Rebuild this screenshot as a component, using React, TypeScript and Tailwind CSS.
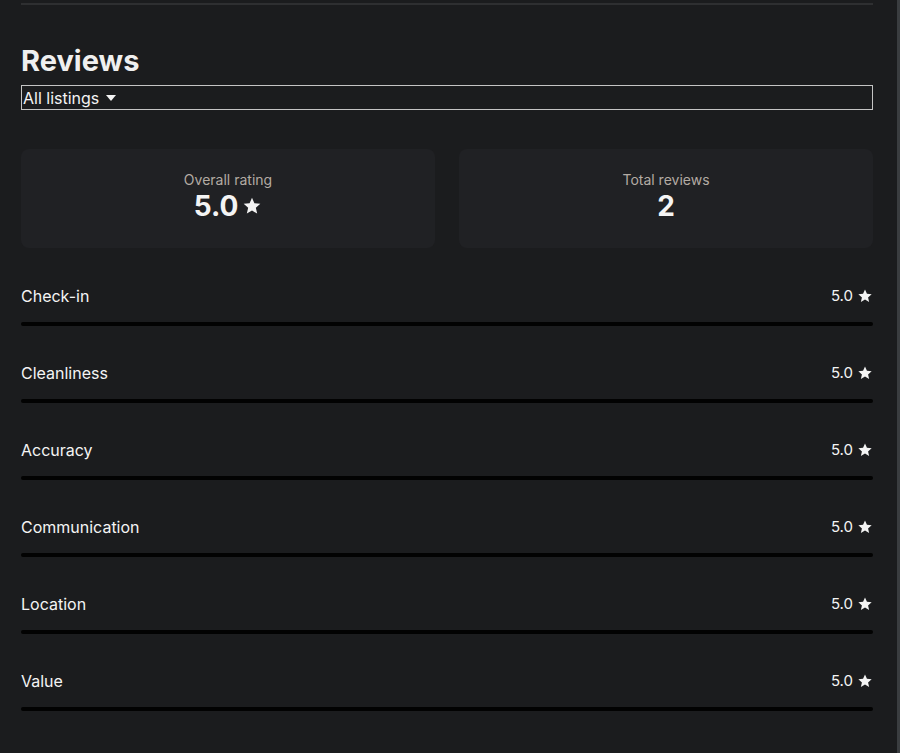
const categories = ["Check-in", "Cleanliness", "Accuracy", "Communication", "Location", "Value"];

function StarIcon({ size }: { size: number }) {
  return (
    <svg width={size} height={size} viewBox="0 0 24 24" fill="currentColor">
      <path d="M12 2.2l2.9 6.6 7.1.6-5.4 4.7 1.6 7-6.2-3.7-6.2 3.7 1.6-7L2 9.4l7.1-.6z" />
    </svg>
  );
}

function StatCard({ label, children }: { label: string; children: React.ReactNode }) {
  return (
    <div className="flex h-[99px] flex-col items-center justify-center rounded-lg bg-[#202124] pb-[5px]">
      <div className="text-[14px] leading-5 text-[#b3aba3]">{label}</div>
      <div className="flex items-center gap-1 text-[28px] font-bold leading-8 text-[#f4f4f4]">{children}</div>
    </div>
  );
}

export default function App() {
  return (
    <div className="flex min-h-[753px] w-full bg-[#1b1c1e] font-['Inter',sans-serif] text-[#f4f4f4]">
      <div className="flex-1 pl-[21px] pr-[24px]">
        <div className="mt-[3px] h-[2px] w-full bg-[#2e2f31]" />
        <h1 className="mt-[38px] text-[29px] font-bold leading-9 text-[#efefef]">Reviews</h1>
        <div className="mt-[6px] flex h-[25px] items-center border border-[#c4c4c4] text-[16px] leading-5">
          <span className="pl-[1px]">All listings</span>
          <svg className="ml-[7px]" width="10" height="6" viewBox="0 0 10 6" fill="currentColor">
            <path d="M0 0h10L5 6z" />
          </svg>
        </div>
        <div className="mt-[39px] grid grid-cols-2 gap-6">
          <StatCard label="Overall rating">
            <span>5.0</span>
            <StarIcon size={20} />
          </StatCard>
          <StatCard label="Total reviews">
            <span>2</span>
          </StatCard>
        </div>
        <div className="mt-[36px] flex flex-col">
          {categories.map((c) => (
            <div key={c} className="flex h-[77px] flex-col">
              <div className="flex items-center justify-between text-[16px] leading-6">
                <span>{c}</span>
                <span className="flex items-center gap-1 text-[15px]">
                  5.0 <StarIcon size={16} />
                </span>
              </div>
              <div className="mt-[14px] h-[4px] w-full rounded-full bg-[#020202]" />
            </div>
          ))}
        </div>
      </div>
      <div className="w-[3px] bg-[#3a3d40]" />
    </div>
  );
}
